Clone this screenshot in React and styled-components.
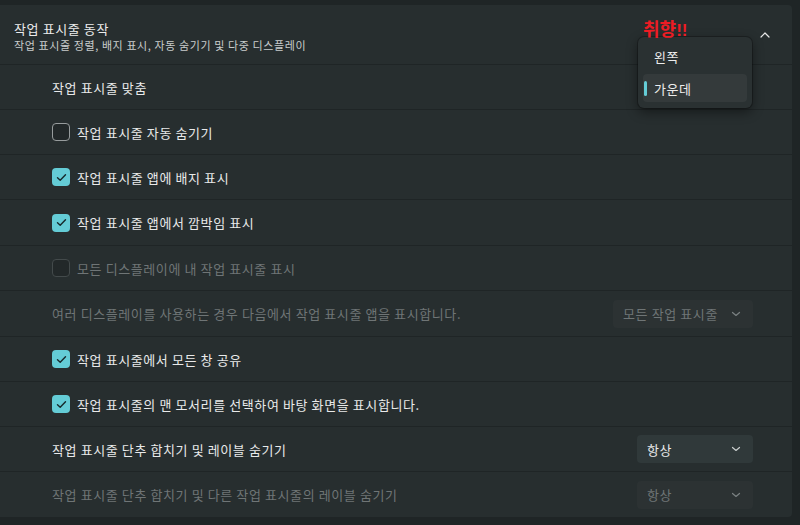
import React from "react";
import styled, { createGlobalStyle } from "styled-components";

const Global = createGlobalStyle`
  html, body { margin: 0; padding: 0; background: #1f2526; }
  body { font-family: "Noto Sans CJK KR", "Noto Sans", sans-serif; -webkit-font-smoothing: antialiased; }
`;

const Page = styled.div`
  width: 800px;
  height: 525px;
  background: #1f2526;
  padding-top: 5px;
  box-sizing: border-box;
  overflow: hidden;
`;

const Panel = styled.div`
  width: 792px;
  display: flex;
  flex-direction: column;
  gap: 1px;
  position: relative;
`;

const Header = styled.div`
  height: 59px;
  background: #272e2f;
  border-radius: 0 4px 0 0;
  display: flex;
  align-items: center;
  justify-content: space-between;
  padding: 0 22px 0 14px;
  box-sizing: border-box;
`;

const HeaderText = styled.div`
  display: flex;
  flex-direction: column;
  margin-top: 3px;
`;

const Title = styled.div`
  color: #ececec;
  font-size: 13px;
  line-height: 18px;
  letter-spacing: 0.6px;
`;

const Subtitle = styled.div`
  color: #c9cccc;
  font-size: 11px;
  line-height: 15px;
  letter-spacing: 0.6px;
`;

const Row = styled.div`
  height: ${(p) => p.$h || 44}px;
  background: #272e2f;
  display: flex;
  align-items: center;
  justify-content: space-between;
  padding: 0 39px 0 52px;
  box-sizing: border-box;
  border-radius: ${(p) => (p.$last ? "0 0 4px 0" : "0")};
`;

const Label = styled.label`
  display: flex;
  align-items: center;
  gap: 7px;
  font-size: 13px;
  letter-spacing: 0.6px;
  color: ${(p) => (p.$disabled ? "#6f7576" : "#e9eaea")};
`;

const Box = styled.span`
  width: 18px;
  height: 18px;
  box-sizing: border-box;
  border-radius: 4px;
  display: inline-flex;
  align-items: center;
  justify-content: center;
  background: ${(p) => (p.$checked ? "#64ccd6" : "#222829")};
  border: ${(p) =>
    p.$checked ? "none" : p.$disabled ? "1px solid #434a4b" : "1px solid #979c9d"};
`;

const Select = styled.div`
  width: ${(p) => p.$w}px;
  height: 28px;
  box-sizing: border-box;
  background: ${(p) => (p.$disabled ? "#2c3233" : "#30393a")};
  border-radius: 4px;
  display: flex;
  align-items: center;
  justify-content: space-between;
  padding: 0 12px 0 10px;
  font-size: 13px;
  letter-spacing: 0.6px;
  color: ${(p) => (p.$disabled ? "#6f7576" : "#e9eaea")};
`;

const Menu = styled.div`
  position: absolute;
  left: 638px;
  top: 32px;
  width: 114px;
  height: 71px;
  box-sizing: border-box;
  background: #2a3132;
  border-radius: 6px;
  box-shadow: 0 4px 12px rgba(0, 0, 0, 0.45), 0 0 0 1px rgba(0, 0, 0, 0.25);
  padding: 5px;
  display: flex;
  flex-direction: column;
  gap: 4px;
`;

const MenuItem = styled.div`
  height: 28px;
  border-radius: 4px;
  display: flex;
  align-items: center;
  padding-left: 11px;
  font-size: 13px;
  letter-spacing: 0.6px;
  color: #ececec;
  position: relative;
  background: ${(p) => (p.$selected ? "#343a3b" : "transparent")};
`;

const Accent = styled.span`
  position: absolute;
  left: 1px;
  top: 7px;
  width: 3px;
  height: 15px;
  border-radius: 2px;
  background: #64ccd6;
`;

const Badge = styled.div`
  position: absolute;
  left: 643px;
  top: 12px;
  display: flex;
  align-items: baseline;
  color: #ec1c24;
  font-weight: 700;
  font-size: 18px;
  line-height: 22px;
`;

const Bang = styled.span`
  font-family: "Liberation Sans", sans-serif;
  font-size: 17px;
  line-height: 22px;
`;

const Check = () => (
  <svg width="11" height="9" viewBox="0 0 11 9" fill="none">
    <path d="M1.5 4.8 L4.2 7.3 L9.5 1.7" stroke="#16292b" strokeWidth="1.4" strokeLinecap="round" strokeLinejoin="round" />
  </svg>
);

const Chevron = ({ up, color = "#c8cccc" }) => (
  <svg width="10" height="6" viewBox="0 0 10 6" fill="none">
    <path d={up ? "M1 5 L5 1 L9 5" : "M1.5 1.5 L5 4.5 L8.5 1.5"} stroke={color} strokeWidth="1.2" strokeLinecap="round" strokeLinejoin="round" />
  </svg>
);

const CheckRow = ({ checked, disabled, text, h }) => (
  <Row $h={h}>
    <Label $disabled={disabled}>
      <Box $checked={checked} $disabled={disabled}>{checked && <Check />}</Box>
      {text}
    </Label>
  </Row>
);

export default function App() {
  return (
    <Page>
      <Global />
      <Panel>
        <Header>
          <HeaderText>
            <Title>작업 표시줄 동작</Title>
            <Subtitle>작업 표시줄 정렬, 배지 표시, 자동 숨기기 및 다중 디스플레이</Subtitle>
          </HeaderText>
          <Chevron up color="#e8e8e8" />
        </Header>
        <Row>
          <Label>작업 표시줄 맞춤</Label>
        </Row>
        <CheckRow text="작업 표시줄 자동 숨기기" />
        <CheckRow checked text="작업 표시줄 앱에 배지 표시" />
        <CheckRow checked text="작업 표시줄 앱에서 깜박임 표시" h={45} />
        <CheckRow disabled text="모든 디스플레이에 내 작업 표시줄 표시" />
        <Row $h={45}>
          <Label $disabled>여러 디스플레이를 사용하는 경우 다음에서 작업 표시줄 앱을 표시합니다.</Label>
          <Select $w={140} $disabled>
            모든 작업 표시줄
            <Chevron color="#7a8081" />
          </Select>
        </Row>
        <CheckRow checked text="작업 표시줄에서 모든 창 공유" />
        <CheckRow checked text="작업 표시줄의 맨 모서리를 선택하여 바탕 화면을 표시합니다." />
        <Row>
          <Label>작업 표시줄 단추 합치기 및 레이블 숨기기</Label>
          <Select $w={116}>
            항상
            <Chevron />
          </Select>
        </Row>
        <Row $last $h={45}>
          <Label $disabled>작업 표시줄 단추 합치기 및 다른 작업 표시줄의 레이블 숨기기</Label>
          <Select $w={116} $disabled>
            항상
            <Chevron color="#7a8081" />
          </Select>
        </Row>
        <Menu>
          <MenuItem>왼쪽</MenuItem>
          <MenuItem $selected>
            <Accent />
            가운데
          </MenuItem>
        </Menu>
        <Badge>
          취향<Bang>!!</Bang>
        </Badge>
      </Panel>
    </Page>
  );
}
